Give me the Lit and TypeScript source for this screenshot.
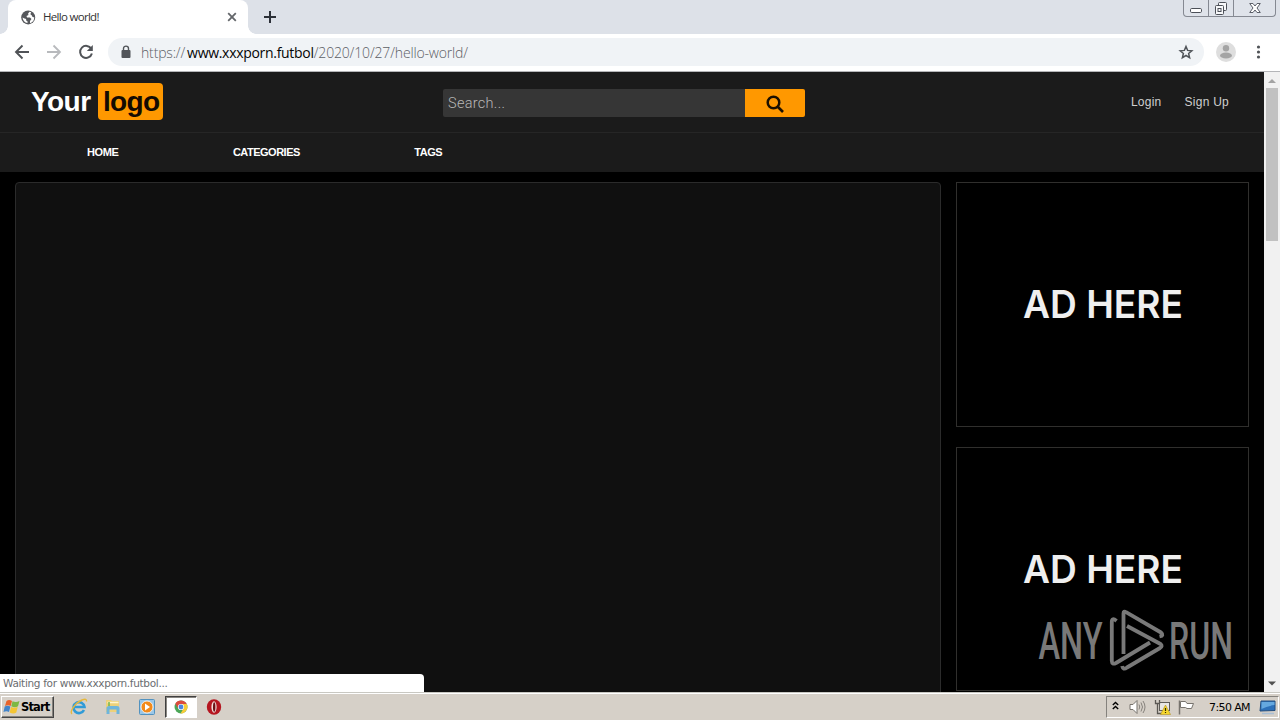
import { LitElement, html, css } from "lit";
import { customElement } from "lit/decorators.js";

@customElement("browser-chrome")
class BrowserChrome extends LitElement {
  static styles = css`
    :host { display: block; height: 72px; flex: none; font-family: "Noto Sans", "DejaVu Sans", sans-serif; }
    * { box-sizing: border-box; }
    svg { display: block; flex: none; }
    .strip { height: 34px; background: #dde1e8; display: flex; padding-left: 8px; }
    .tab { width: 240px; height: 34px; background: #fff; border-radius: 8px 8px 0 0; display: flex; align-items: center; padding: 0 10px 0 13px; position: relative; }
    .tab::before, .tab::after { content: ""; position: absolute; bottom: 0; width: 8px; height: 8px; }
    .tab::before { left: -8px; background: radial-gradient(circle at 0 0, transparent 7.5px, #fff 8px); }
    .tab::after { right: -8px; background: radial-gradient(circle at 100% 0, transparent 7.5px, #fff 8px); }
    .title { font-family: "Open Sans", sans-serif; font-size: 11.5px; color: #333; margin-left: 7px; margin-top: -2px; flex: 1; letter-spacing: -0.7px; white-space: nowrap; }
    .plus { margin: 10px 0 0 15px; }
    .controls { margin-left: auto; margin-right: 4px; width: 93px; height: 17px; border: 1px solid #858992; border-top: 0; border-radius: 0 0 4px 4px; display: flex; background: #dfe3ea; }
    .control { display: flex; justify-content: center; width: 25px; border-right: 1px solid #858992; }
    .control.close { flex: 1; border: 0; }
    .bar { height: 38px; background: #fff; border-bottom: 1px solid #b4b5b8; display: flex; align-items: center; padding: 0 14px 1px; }
    .nav { margin-right: 16px; }
    .omni { height: 28px; width: 1096px; border-radius: 14px; margin-left: -2px; background: #f0f3f6; display: flex; align-items: center; padding: 0 10px 0 13px; }
    .url { flex: 1; margin-left: 10px; font-family: "Open Sans", sans-serif; font-weight: 300; font-size: 14px; letter-spacing: -0.16px; color: #5c6065; white-space: nowrap; }
    .domain { color: #050505; font-weight: 400; letter-spacing: -0.3px; margin-left: 2px; }
    .avatar { margin-left: 12px; }
    .dots { margin-left: 20px; }
  `;
  render() {
    return html`
      <div class="strip">
        <div class="tab">
          <svg width="15" height="15" viewBox="0 0 15 15"><circle cx="7.2" cy="7.4" r="7" fill="#56585c"/><path d="M8.5 1.7 7 3.7 7.5 5 5.5 6 6 7.5H9L10.5 9 9 11v2.2C12 12.5 13.3 10 13.2 7 12.2 7.5 11 7 11 5.5 9.5 5.3 9 4 10.2 2.3ZM1.5 7.4C1.8 10.5 3.8 12.5 6.5 13V11.2C5 11 5 9.8 5.2 9L3.5 8.5Z" fill="#fff"/></svg>
          <span class="title">Hello world!</span>
          <svg width="12" height="12" viewBox="0 0 12 12"><path d="m2.2 2.2 7.600 7.600m0-7.600-7.600 7.600" stroke="#63666a" stroke-width="1.8"/></svg>
        </div>
        <svg class="plus" width="14" height="14" viewBox="0 0 14 14"><path d="M7 1v12M1 7h12" stroke="#2c3038" stroke-width="2"/></svg>
        <div class="controls">
          <div class="control"><svg width="16" height="16" viewBox="0 0 16 16"><rect x="2.5" y="8.5" width="11" height="4" rx="1.2" fill="#fff" stroke="#4c5058"/></svg></div>
          <div class="control"><svg width="16" height="16" viewBox="0 0 16 16"><g fill="#f7f8fa" stroke="#4c5058"><rect x="5.5" y="2.5" width="8" height="8" rx="1"/><rect x="2.5" y="5.5" width="8" height="9" rx="1"/><rect x="5" y="8.5" width="3" height="3"/></g></svg></div>
          <div class="control close"><svg width="16" height="16" viewBox="0 0 16 16"><path d="M2.7 3.5H6L8 6l2-2.500h3.300L10 8l3.300 4.500H10L8 10l-2 2.500H2.700L6 8Z" fill="#fff" stroke="#5b5f68"/></svg></div>
        </div>
      </div>
      <div class="bar">
        <svg class="nav" width="16" height="16" viewBox="0 0 16 16"><path d="M15 8H2.300M8.500 1.500 2 8l6.500 6.500" fill="none" stroke="#505357" stroke-width="1.9"/></svg>
        <svg class="nav" width="16" height="16" viewBox="0 0 16 16"><path d="M1 8h12.700M7.500 1.500 14 8l-6.500 6.500" fill="none" stroke="#b8babd" stroke-width="1.800"/></svg>
        <svg class="nav" width="16" height="16" viewBox="0 0 16 16"><path d="M13.300 4.800A6 6 0 1 0 13.900 9.500" fill="none" stroke="#505357" stroke-width="2"/><path d="M14.800 1v6h-6Z" fill="#505357"/></svg>
        <div class="omni">
          <svg width="10" height="14" viewBox="0 0 10 14"><rect x="0.500" y="5" width="9" height="8" rx="1" fill="#515459"/><path d="M2.500 5.500V3.600a2.500 2.500 0 0 1 5 0v1.900" fill="none" stroke="#515459" stroke-width="1.400"/></svg>
          <span class="url">https://<span class="domain">www.xxxporn.futbol</span>/2020/10/27/hello-world/</span>
          <svg width="16" height="16" viewBox="0 0 16 16"><path d="m8 2.500 1.600 3.900 4.200.400-3.200 2.700 1 4.200L8 11.500l-3.600 2.200 1-4.200-3.200-2.700 4.200-.400Z" fill="none" stroke="#505459" stroke-width="1.500"/></svg>
        </div>
        <svg class="avatar" width="20" height="20" viewBox="0 0 20 20"><circle cx="10" cy="10" r="10" fill="#dedede"/><circle cx="10" cy="6.300" r="3.200" fill="#a4a4a4"/><ellipse cx="10" cy="13.500" rx="6" ry="3" fill="#a4a4a4"/></svg>
        <svg class="dots" width="5" height="16" viewBox="0 0 5 16"><g fill="#505357"><circle cx="2.500" cy="3" r="1.600"/><circle cx="2.500" cy="8" r="1.600"/><circle cx="2.500" cy="13" r="1.600"/></g></svg>
      </div>`;
  }
}

@customElement("site-page")
class SitePage extends LitElement {
  static styles = css`
    :host { display: flex; flex: 1; min-height: 0; position: relative; font-family: "Liberation Sans", sans-serif; }
    * { box-sizing: border-box; }
    svg { display: block; flex: none; }
    .page { flex: 1; background: #000; display: flex; flex-direction: column; overflow: hidden; }
    .head { height: 60px; flex: none; background: #1b1b1b; display: flex; padding: 0 35px 0 31px; }
    .logo { width: 412px; padding-top: 11px; display: flex; align-items: flex-start; font-size: 28px; line-height: 37px; font-weight: 700; color: #fff; letter-spacing: -0.550px; }
    .your { width: 67px; }
    .mark { background: #ff9800; color: #140b02; border-radius: 4px; padding-left: 5px; height: 37px; width: 65px; letter-spacing: -0.700px; }
    .search { display: flex; width: 362px; height: 28px; margin-top: 17px; }
    .field { flex: 1; background: #363636; border-radius: 2px 0 0 2px; padding: 1px 0 0 5px; color: #b8b8b8; font-family: Roboto, sans-serif; font-weight: 300; font-size: 14.500px; line-height: 28px; letter-spacing: 0.300px; }
    .go { width: 60px; background: #ff9800; border-radius: 0 2px 2px 0; display: flex; align-items: center; justify-content: center; padding-top: 2px; }
    .links { margin-left: auto; display: flex; gap: 23px; padding-top: 22px; font-size: 12px; line-height: 16px; color: #cfcfcf; letter-spacing: 0.250px; }
    .menu { height: 40px; flex: none; background: #1b1b1b; border-top: 1px solid #262626; display: flex; gap: 114.500px; padding: 12px 0 0 87px; color: #fff; font-weight: 700; font-size: 11px; line-height: 15px; letter-spacing: -0.500px; }
    .home { letter-spacing: -0.400px; }
    .body { flex: 1; display: flex; gap: 15px; padding: 10px 15px 0; min-height: 0; }
    .player { width: 926px; height: 560px; background: #101010; border: 1px solid #2b2b2b; border-radius: 4px; }
    .ads { width: 293px; display: flex; flex-direction: column; gap: 20px; }
    .ad { height: 245px; flex: none; border: 1px solid #302f2d; }
    .ad:last-child { height: 244px; }
    .scroll { width: 16px; background: #f1f1f1; display: flex; flex-direction: column; align-items: center; padding: 5px 0 4px; }
    .thumb { width: 12px; height: 153px; margin-top: 3px; margin-bottom: auto; background: #c1c1c1; }
    .status { position: absolute; left: 0; bottom: 0; width: 424px; height: 18px; background: #fff; border-radius: 0 4px 0 0; padding-left: 3px; font-family: "DejaVu Sans", sans-serif; font-size: 10.500px; line-height: 18px; color: #6b6d70; white-space: nowrap; letter-spacing: -0.320px; }
    .water { position: absolute; left: 1036px; top: 526px; }
  `;
  ad = () => html`<div class="ad"><svg width="291" height="242" viewBox="0 0 291 242">
    <text x="66" y="134.800" font-family="Inter" font-weight="600" font-size="38.500" textLength="160" lengthAdjust="spacingAndGlyphs" fill="#efefef">AD HERE</text></svg></div>`;
  render() {
    return html`
      <div class="page">
        <div class="head">
          <div class="logo"><span class="your">Your</span><span class="mark">logo</span></div>
          <div class="search"><div class="field">Search...</div><div class="go">
            <svg width="18" height="18" viewBox="0 0 18 18"><circle cx="7.500" cy="7.500" r="5.800" fill="none" stroke="#1c1000" stroke-width="2.500"/><path d="m11.500 11.500 5.500 5.500" stroke="#1c1000" stroke-width="2.600"/></svg></div></div>
          <div class="links"><span>Login</span><span>Sign Up</span></div>
        </div>
        <div class="menu"><span class="home">HOME</span><span>CATEGORIES</span><span>TAGS</span></div>
        <div class="body"><div class="player"></div><div class="ads">${this.ad()}${this.ad()}</div></div>
      </div>
      <div class="scroll">
        <svg width="8" height="8" viewBox="0 0 8 8"><path d="M0 6 4 2l4 4Z" fill="#a3a3a3"/></svg>
        <div class="thumb"></div>
        <svg width="8" height="8" viewBox="0 0 8 8"><path d="M0 1.500h8l-4 4Z" fill="#505050"/></svg>
      </div>
      <div class="status">Waiting for www.xxxporn.futbol...</div>
      <svg class="water" width="210" height="90" viewBox="0 -10 210 90">
        <g fill="#797979" font-family="Roboto" font-weight="500" font-size="51.500">
          <text x="2.500" y="51" textLength="64" lengthAdjust="spacingAndGlyphs">ANY</text>
          <text x="133" y="51" textLength="64" lengthAdjust="spacingAndGlyphs">RUN</text>
        </g>
        <g fill="none" stroke="#797979" stroke-width="3.800" stroke-linejoin="round">
          <path d="M87.500 46V5.500Q87.500 2.500 90 4.200L125 24.500Q128.500 27.500 123.500 28.500"/>
          <path d="M80.500 13Q75.800 9 75.800 14V53Q76 57 80 55L114 34.500"/>
          <path d="M91 18 124.500 36Q127 38 124 40L91 59.500Q87 62.500 86.200 58"/>
        </g>
      </svg>`;
  }
}

@customElement("task-bar")
class TaskBar extends LitElement {
  static styles = css`
    :host { display: flex; height: 28px; flex: none; background: #d6d0c8; border-top: 1px solid #c9c8c2; box-shadow: inset 0 1px #fff; box-sizing: border-box; padding: 3px 1px 1px; font-family: "DejaVu Sans", sans-serif; }
    * { box-sizing: border-box; }
    svg { display: block; flex: none; }
    .start { width: 53px; height: 22px; border: 1px solid; border-color: #fff #444 #444 #fff; box-shadow: inset -1px -1px #85827d; display: flex; align-items: center; font-weight: 700; font-size: 11.500px; letter-spacing: -0.850px; color: #000; padding-left: 1px; }
    .apps { display: flex; margin-left: 8px; }
    .app { width: 34px; height: 22px; display: flex; align-items: center; justify-content: center; }
    .app.on { width: 32px; margin: 0 1px; background: #fff; border: 1px solid; border-color: #404040 #fff #fff #404040; box-shadow: inset 1px 1px #8a8782; }
    .app.on + .app { margin-left: -1px; }
    .tray { margin-left: auto; width: 173px; height: 22px; border: 1px solid; border-color: #85827d #fff #fff #85827d; display: flex; align-items: center; padding: 0 2px 0 5px; }
    .gap { margin-left: 8px; }
    .first { margin-left: 10px; }
    .flag { margin-left: 7px; }
    .time { font-size: 11px; letter-spacing: -0.600px; color: #000; margin-left: auto; margin-right: 9px; white-space: nowrap; }
  `;
  render() {
    return html`
      <div class="start"><svg width="18" height="18" viewBox="0 0 18 18"><path d="M3.500 3Q6 1 9 3L7.700 8Q5 6.500 2 8Z" fill="#e8632b"/><path d="M9.500 3.300Q13 5 16.500 3L15 8.300Q12 10 8.300 8.300Z" fill="#7db843"/><path d="M1.700 8.500Q4.500 7 7.400 8.500L6 14Q3.500 12.500.500 14Z" fill="#4284ca"/><path d="M8 9Q11 10.500 14.700 9L13.300 14.500Q10.500 16.500 6.700 14.500Z" fill="#f4c534"/></svg><span>Start</span></div>
      <div class="apps">
        <div class="app"><svg width="18" height="18" viewBox="0 0 18 18"><path d="M14 12A5.500 5.500 0 1 1 14.500 9H5" fill="none" stroke="#309bd7" stroke-width="2.600"/><path d="M2 16C-1 14 5 5 12 2q5-2 4.500 1.500" fill="none" stroke="#e6b83c" stroke-width="1.400"/></svg></div>
        <div class="app"><svg width="18" height="18" viewBox="0 0 18 18"><path d="M2 2h5l1 1h7v11H2Z" fill="#edd17a"/><path d="M3.500 4.500h11" stroke="#fff5cd" stroke-width="1.500"/><path d="M2.500 16V9.500Q3 8 5 8h8q2.500 0 2.500 2v6h-3v-4.500h-7V16Z" fill="#6eb5dc"/><path d="M5 4v4" stroke="#75b44c" stroke-width="1.500"/></svg></div>
        <div class="app"><svg width="16" height="16" viewBox="0 0 16 16"><rect x=".500" y=".500" width="15" height="15" rx="1" fill="#9ac7e8" stroke="#5292bf"/><circle cx="8" cy="8" r="6" fill="#f28a1b" stroke="#fff" stroke-width=".800"/><path d="m6 4.500 5 3.500-5 3.500Z" fill="#fff"/></svg></div>
        <div class="app on"><svg width="14" height="14" viewBox="0 0 14 14"><circle cx="7" cy="7" r="6.500" fill="#4ba657"/><path d="M1.300 3.800A6.500 6.500 0 0 1 12.700 4H7L4.200 8.500Z" fill="#dc4b3e"/><path d="M7 4h5.700A6.500 6.500 0 0 1 6.500 13.500L9.600 8.500Z" fill="#f7cc38"/><circle cx="7" cy="7" r="3.100" fill="#fff"/><circle cx="7" cy="7" r="2.400" fill="#4a86e0"/></svg></div>
        <div class="app"><svg width="16" height="16" viewBox="0 0 16 16"><ellipse cx="8" cy="8" rx="7.200" ry="7.700" fill="#b51620"/><ellipse cx="8" cy="8" rx="2.600" ry="5.700" fill="#f2dfdc"/><ellipse cx="8.200" cy="8" rx="1.200" ry="4.800" fill="#6c1015"/></svg></div>
      </div>
      <div class="tray">
        <svg width="7" height="12" viewBox="0 0 7 12"><path d="m.800 4 2.700-2.500L6.200 4M.800 8l2.700-2.500L6.200 8" fill="none" stroke="#000" stroke-width="1.400"/></svg>
        <svg class="first" width="17" height="16" viewBox="0 0 17 16"><path d="M1 5.500h3l4-4v13l-4-4H1Z" fill="#fff" stroke="#77736d"/><path d="M10 5.500q1.500 2.500 0 5M12 3.500q3 4.500 0 9M14 2q4 6 0 12" fill="none" stroke="#86827c"/></svg>
        <svg class="gap" width="17" height="16" viewBox="0 0 17 16"><rect x="5.500" y="3.500" width="10" height="8" fill="#e9e7e3" stroke="#605d59"/><path d="M1.500 1v3.500h4V1M3.500 4.500v10h4" fill="none" stroke="#5b5853" stroke-width="1.300"/><path d="m11.500 6 5 9.500h-10Z" fill="#f6d72c" stroke="#b2901d" stroke-width=".600"/><path d="M11.500 9v3M11.500 13v1" stroke="#332900" stroke-width="1.200"/></svg>
        <svg class="flag" width="17" height="16" viewBox="0 0 17 16"><path d="M1.500 1.500v14" stroke="#77736d" stroke-width="1.500"/><path d="M2.500 2.500h5l1.500 2h6.500l-2 5H9l-1.500-1h-5Z" fill="#fff" stroke="#77736d"/></svg>
        <span class="time">7:50 AM</span>
        <svg width="17" height="16" viewBox="0 0 17 16"><path d="M2 2h14v9.500L1 12Z" fill="#2c70b9" stroke="#234c7c"/><path d="M2.500 3h13v3Q8 7 2.500 10Z" fill="#65a8df"/><path d="M3 14.500h12" stroke="#a9bfd4" stroke-width="1.500"/></svg>
      </div>`;
  }
}

@customElement("app-root")
class AppRoot extends LitElement {
  static styles = css`
    :host { display: flex; flex-direction: column; width: 1280px; height: 720px; overflow: hidden; background: #000; }
  `;
  render() {
    return html`<browser-chrome></browser-chrome><site-page></site-page><task-bar></task-bar>`;
  }
}
